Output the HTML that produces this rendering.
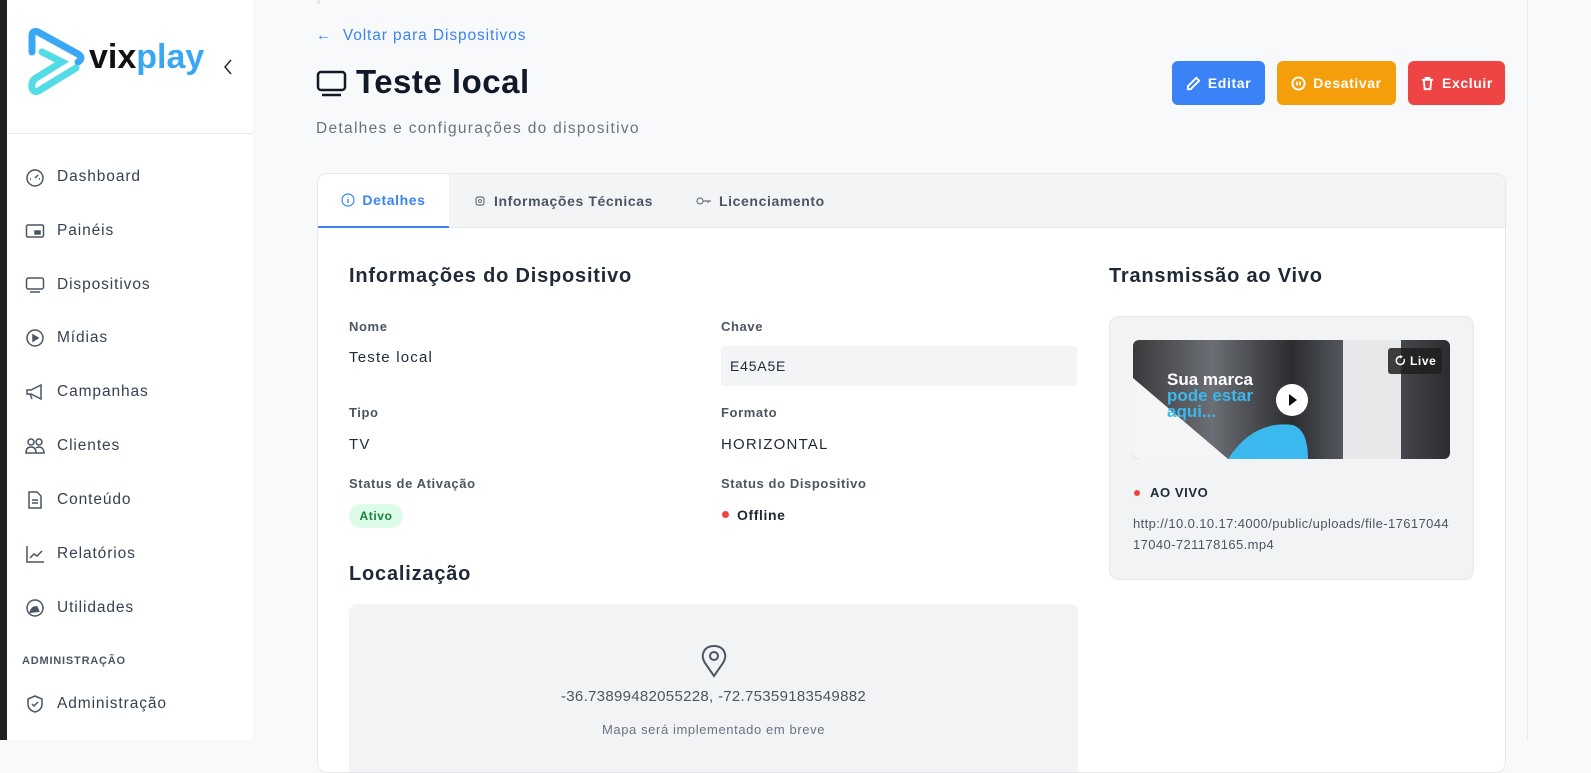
<!DOCTYPE html>
<html><head><meta charset="utf-8"><style>
*{box-sizing:border-box;margin:0;padding:0}
body{width:1591px;height:740px;overflow:hidden;background:#f8f9fb;font-family:"Liberation Sans",sans-serif;color:#1f2937;position:relative;letter-spacing:0.6px}
.dark{position:absolute;left:0;top:0;width:7px;height:740px;background:#202124}
.side{position:absolute;left:7px;top:0;width:246px;height:740px;background:#fff}
.logo{height:134px;border-bottom:1px solid #e5e7eb;position:relative}
.nav{position:absolute;left:18px;font-size:15.5px;color:#374151;display:flex;align-items:center;letter-spacing:0.9px}
.nav svg{width:20px;height:20px;margin-right:12px;fill:none;stroke:#4b5563;stroke-width:1.5}
.abs{position:absolute}
.btn{position:absolute;top:61px;height:44px;border-radius:6px;color:#fff;font-size:14px;font-weight:bold;display:flex;align-items:center;justify-content:center;gap:7px}
.btn svg{width:15px;height:15px;fill:none;stroke:#fff;stroke-width:2}
.card{position:absolute;left:317px;top:173px;width:1189px;height:600px;background:#fff;border:1px solid #e5e7eb;border-radius:10px;overflow:hidden}
.tabs{height:54px;background:#f3f4f6;border-bottom:1px solid #e5e7eb;position:relative}
.tab{position:absolute;top:0;height:54px;display:flex;align-items:center;font-size:14px;font-weight:bold;color:#4b5563;gap:7px}
.lbl{position:absolute;font-size:13px;font-weight:bold;color:#4b5563}
.val{position:absolute;font-size:15px;color:#1f2937;letter-spacing:1.2px}
h2{position:absolute;font-size:20px;font-weight:bold;color:#1f2937;letter-spacing:0.8px}
</style></head><body>
<div class="dark"></div>
<div class="side">
 <div class="logo">
  <svg class="abs" style="left:19px;top:28px" width="60" height="68" viewBox="0 0 60 68"><path d="M6 24 V8 Q6 2 12 4 L52 26 Q58 30 52 34" fill="none" stroke="#3aa7f5" stroke-width="7" stroke-linecap="round"/><path d="M16 24 L36 34 L10 50 Q5 53 6 60 Q8 66 14 62 L50 40" fill="none" stroke="#54dce6" stroke-width="7" stroke-linecap="round"/></svg>
  <div class="abs" style="left:82px;top:38px;font-size:34px;font-weight:bold;letter-spacing:0px"><span style="color:#111">vix</span><span style="color:#3aa7f5">play</span></div>
  <svg class="abs" style="left:216px;top:59px" width="10" height="16" viewBox="0 0 10 16"><path d="M8 1 L2 8 L8 15" fill="none" stroke="#1f2937" stroke-width="1.5"/></svg>
 </div>
 <div class="nav" style="top:167px"><svg viewBox="0 0 20 20"><circle cx="10" cy="11" r="8"/><path d="M10 11 L13 8 M5 12h1 M14 12h1"/></svg>Dashboard</div>
 <div class="nav" style="top:221px"><svg viewBox="0 0 20 20"><rect x="1.5" y="4" width="17" height="12" rx="1.5"/><rect x="10" y="10" width="5" height="3" fill="#4b5563"/></svg>Painéis</div>
 <div class="nav" style="top:275px"><svg viewBox="0 0 20 20"><rect x="1.5" y="3" width="17" height="11" rx="2"/><path d="M5 17h10"/></svg>Dispositivos</div>
 <div class="nav" style="top:328px"><svg viewBox="0 0 20 20"><circle cx="10" cy="10" r="8"/><path d="M8 7 L13 10 L8 13Z" fill="#4b5563"/></svg>Mídias</div>
 <div class="nav" style="top:382px"><svg viewBox="0 0 20 20"><path d="M2 8h4l10-5v14L6 12H2z M5 12 L7 17"/></svg>Campanhas</div>
 <div class="nav" style="top:436px"><svg viewBox="0 0 20 20"><circle cx="6" cy="6" r="3"/><circle cx="14" cy="6" r="3"/><path d="M1 17 Q1 11 6 11 Q11 11 11 17Z M11 12 Q14 10 17 12 Q19 14 19 17 H11"/></svg>Clientes</div>
 <div class="nav" style="top:490px"><svg viewBox="0 0 20 20"><path d="M4 2h8l4 4v12H4z M7 10h6 M7 13h6"/></svg>Conteúdo</div>
 <div class="nav" style="top:544px"><svg viewBox="0 0 20 20"><path d="M2 2v16h17 M5 14 L9 10 L12 12 L17 7"/></svg>Relatórios</div>
 <div class="nav" style="top:598px"><svg viewBox="0 0 20 20"><circle cx="10" cy="10" r="8"/><path d="M5 15 Q7 8 12 9 L14 14" fill="#4b5563"/></svg>Utilidades</div>
 <div class="abs" style="left:15px;top:655px;font-size:11px;font-weight:bold;color:#4b5563;letter-spacing:0.8px">ADMINISTRAÇÃO</div>
 <div class="nav" style="top:694px"><svg viewBox="0 0 20 20"><path d="M10 2 L17 5 V10 Q17 16 10 18 Q3 16 3 10 V5Z M7 10 L9 12 L13 8"/></svg>Administração</div>
</div>

<div class="abs" style="left:317px;top:0;width:3px;height:4px;background:#e5e7eb"></div>
<div class="abs" style="left:316px;top:27px;font-size:15.5px;color:#3b82f6;letter-spacing:0.9px">← &nbsp;Voltar para Dispositivos</div>
<svg class="abs" style="left:316px;top:70px" width="32" height="28" viewBox="0 0 32 28"><rect x="2" y="2" width="27" height="18" rx="3" fill="none" stroke="#111827" stroke-width="2.5"/><path d="M6 25h19" stroke="#111827" stroke-width="2.5"/></svg>
<div class="abs" style="left:356px;top:63px;font-size:33px;font-weight:bold;color:#111827;letter-spacing:0.5px">Teste local</div>
<div class="abs" style="left:316px;top:120px;font-size:15.5px;color:#6b7280;letter-spacing:1.3px">Detalhes e configurações do dispositivo</div>

<div class="btn" style="left:1172px;width:93px;background:#3b82f6"><svg viewBox="0 0 16 16"><path d="M11 2 L14 5 L5 14 H2 V11Z"/></svg>Editar</div>
<div class="btn" style="left:1277px;width:119px;background:#f59e0b"><svg viewBox="0 0 16 16"><circle cx="8" cy="8" r="6.5"/><path d="M6.5 6v4 M9.5 6v4"/></svg>Desativar</div>
<div class="btn" style="left:1408px;width:97px;background:#ef4444"><svg viewBox="0 0 16 16"><path d="M2 4h12 M6 4V2h4v2 M4 4l1 10h6l1-10"/></svg>Excluir</div>

<div class="card">
 <div class="tabs">
  <div class="tab" style="left:0;width:131px;background:#fff;color:#3b82f6;justify-content:center;border-bottom:2px solid #3b82f6"><svg width="14" height="14" viewBox="0 0 14 14"><circle cx="7" cy="7" r="6" fill="none" stroke="#3b82f6" stroke-width="1.2"/><path d="M7 6v4 M7 4v.5" stroke="#3b82f6" stroke-width="1.4"/></svg>Detalhes</div>
  <div class="tab" style="left:155px"><svg width="14" height="14" viewBox="0 0 14 14"><rect x="3" y="3" width="8" height="8" rx="2" fill="none" stroke="#6b7280" stroke-width="1.2"/><circle cx="7" cy="7" r="1.5" fill="none" stroke="#6b7280"/></svg>Informações Técnicas</div>
  <div class="tab" style="left:378px"><svg width="16" height="10" viewBox="0 0 16 10"><circle cx="4" cy="5" r="3" fill="none" stroke="#6b7280" stroke-width="1.2"/><path d="M7 5h8 M12 5v2" stroke="#6b7280" stroke-width="1.2"/></svg>Licenciamento</div>
 </div>
 <h2 style="left:31px;top:91px">Informações do Dispositivo</h2>
 <div class="lbl" style="left:31px;top:145px">Nome</div>
 <div class="val" style="left:31px;top:175px">Teste local</div>
 <div class="lbl" style="left:403px;top:145px">Chave</div>
 <div class="abs" style="left:403px;top:172px;width:356px;height:40px;background:#f3f4f6;border-radius:4px;font-size:14px;padding:12px 9px;letter-spacing:0.8px">E45A5E</div>
 <div class="lbl" style="left:31px;top:231px">Tipo</div>
 <div class="val" style="left:31px;top:262px">TV</div>
 <div class="lbl" style="left:403px;top:231px">Formato</div>
 <div class="val" style="left:403px;top:262px">HORIZONTAL</div>
 <div class="lbl" style="left:31px;top:302px">Status de Ativação</div>
 <div class="abs" style="left:31px;top:330px;width:54px;height:24px;border-radius:12px;background:#dcfce7;color:#15803d;font-size:12px;font-weight:bold;text-align:center;line-height:24px">Ativo</div>
 <div class="lbl" style="left:403px;top:302px">Status do Dispositivo</div>
 <div class="abs" style="left:404px;top:337px;width:7px;height:7px;border-radius:50%;background:#ef4444"></div>
 <div class="abs" style="left:419px;top:333px;font-size:14px;font-weight:bold">Offline</div>
 <h2 style="left:31px;top:389px">Localização</h2>
 <div class="abs" style="left:31px;top:430px;width:729px;height:200px;background:#f2f3f5;border-radius:8px">
  <svg class="abs" style="left:352px;top:40px" width="26" height="34" viewBox="0 0 26 34"><path d="M13 32 L4 19 Q1 14 2 10 Q4 2 13 2 Q22 2 24 10 Q25 14 22 19Z" fill="none" stroke="#4b5563" stroke-width="2"/><circle cx="13" cy="12" r="4" fill="none" stroke="#4b5563" stroke-width="2"/></svg>
  <div class="abs" style="left:0;width:729px;top:84px;text-align:center;font-size:15px;color:#4b5563;letter-spacing:0.3px">-36.73899482055228, -72.75359183549882</div>
  <div class="abs" style="left:0;width:729px;top:118px;text-align:center;font-size:13px;color:#6b7280">Mapa será implementado em breve</div>
 </div>
 <h2 style="left:791px;top:91px">Transmissão ao Vivo</h2>
 <div class="abs" style="left:791px;top:142px;width:365px;height:264px;background:#f2f3f5;border:1px solid #e5e7eb;border-radius:10px">
  <div class="abs" style="left:23px;top:23px;width:317px;height:119px;border-radius:6px;overflow:hidden;background:linear-gradient(90deg,#3a3a3c 0%,#6b6e74 25%,#2c2d30 50%,#5c6068 70%,#2b2c2f 100%)">
   <svg class="abs" style="left:0;top:0" width="317" height="119"><polygon points="0,38 95,119 0,119" fill="#f5f5f5"/><path d="M95 119 Q120 80 160 85 Q175 90 175 119Z" fill="#3bb8ee"/><rect x="210" y="0" width="58" height="119" fill="#e8e8ea"/></svg>
   <div class="abs" style="left:34px;top:32px;color:#fff;font-size:17px;font-weight:bold;line-height:16px;letter-spacing:0">Sua marca<br><span style="color:#3bb8ee">pode estar<br>aqui...</span></div>
   <div class="abs" style="left:143px;top:44px;width:32px;height:32px;border-radius:50%;background:#fff"><svg width="32" height="32"><path d="M13 10 L21 16 L13 22Z" fill="#111"/></svg></div>
   <div class="abs" style="left:255px;top:8px;width:54px;height:26px;border-radius:3px;background:rgba(30,30,30,.85);color:#fff;font-size:12px;font-weight:bold;line-height:26px;padding-left:22px"><svg class="abs" style="left:7px;top:7px" width="11" height="11" viewBox="0 0 11 11"><path d="M9 4 A4 4 0 1 1 6 1.6" fill="none" stroke="#fff" stroke-width="1.5"/><path d="M5 0 L8 1.8 L5 3.5Z" fill="#fff"/></svg>Live</div>
  </div>
  <div class="abs" style="left:24px;top:173px;width:6px;height:6px;border-radius:50%;background:#ef4444"></div>
  <div class="abs" style="left:40px;top:168px;font-size:13px;font-weight:bold">AO VIVO</div>
  <div class="abs" style="left:23px;top:196px;width:320px;font-size:13px;color:#4b5563;line-height:21px;word-break:break-all;letter-spacing:0.4px">http://10.0.10.17:4000/public/uploads/file-1761704417040-721178165.mp4</div>
 </div>
</div>
<div class="abs" style="left:1527px;top:0;width:1px;height:740px;background:#e5e7eb"></div>
</body></html>
